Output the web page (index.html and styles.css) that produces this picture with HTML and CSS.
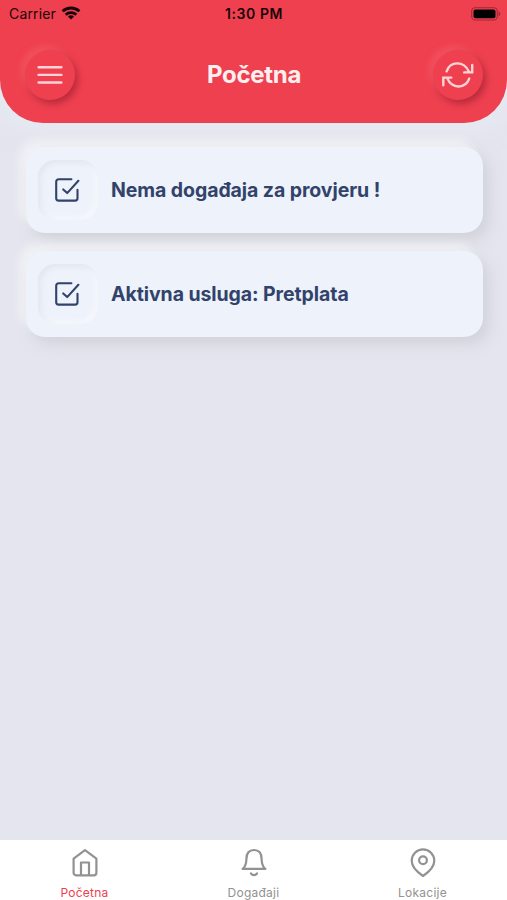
FILE: index.html
```html
<!DOCTYPE html>
<html lang="hr">
<head>
<meta charset="utf-8">
<meta name="viewport" content="width=device-width, initial-scale=1">
<title>Početna</title>
<link rel="stylesheet" href="styles.css">
</head>
<body>
<div class="app">
  <header class="header">
    <div class="status">
      <div class="carrier"><span>Carrier</span>
        <svg class="wifi" width="20" height="16" viewBox="0 0 20 16" fill="none" stroke="#180508" stroke-width="2.9"><path d="M1.6 6.3a12.3 12.3 0 0 1 16.8 0M4.7 9.7a7.8 7.8 0 0 1 10.6 0"/><path d="M10 14.6 6.9 11.6a4.6 4.6 0 0 1 6.2 0Z" fill="#180508" stroke="none"/></svg>
      </div>
      <span class="time">1:30 PM</span>
      <svg class="battery" width="30" height="14" viewBox="0 0 30 14"><rect x=".7" y=".7" width="25.6" height="12.3" rx="3.6" fill="none" stroke="#9d2937" stroke-width="1.1"/><rect x="2.5" y="2.5" width="22" height="8.8" rx="2" fill="#000"/><path d="M27.6 4.6c2.2.7 2.2 3.9 0 4.6Z" fill="#9d2937"/></svg>
    </div>
    <div class="bar">
      <button class="round" aria-label="Izbornik"><svg width="28" height="24" viewBox="0 0 28 24" stroke="#ffd3d6" stroke-width="2.4" stroke-linecap="round"><path d="M2.6 4.3h22.8M2.6 11.9h22.8M2.6 19.5h22.8"/></svg></button>
      <h1>Početna</h1>
      <button class="round" aria-label="Osvježi"><svg width="34" height="30" viewBox="0 0 34 30" fill="none" stroke="#ffd3d6" stroke-width="2.4" stroke-linecap="round" stroke-linejoin="miter"><path d="M5.6 11.3C9.2.9 22.8.6 27.8 11.5M31.2 5v7.4h-8M28.2 18.6C24.6 28.8 11 29.4 6.3 18.4M2.3 25.2v-7.6h8"/></svg></button>
    </div>
  </header>
  <main class="list">
    <article class="card">
      <div class="well"><svg width="26" height="26" viewBox="0 0 26 26" fill="none" stroke="#32436b" stroke-width="2.1" stroke-linecap="round" stroke-linejoin="round"><path d="M16.4 2.3H3.6a2.4 2.4 0 0 0-2.4 2.4v16.5a2.4 2.4 0 0 0 2.4 2.4h16.5a2.4 2.4 0 0 0 2.4-2.4v-8.5M8.2 12.4l4 3.7L23.4 3.8"/></svg></div>
      <h2>Nema događaja za provjeru !</h2>
    </article>
    <article class="card">
      <div class="well"><svg width="26" height="26" viewBox="0 0 26 26" fill="none" stroke="#32436b" stroke-width="2.1" stroke-linecap="round" stroke-linejoin="round"><path d="M16.4 2.3H3.6a2.4 2.4 0 0 0-2.4 2.4v16.5a2.4 2.4 0 0 0 2.4 2.4h16.5a2.4 2.4 0 0 0 2.4-2.4v-8.5M8.2 12.4l4 3.7L23.4 3.8"/></svg></div>
      <h2>Aktivna usluga: Pretplata</h2>
    </article>
  </main>
  <nav class="tabs">
    <a class="tab active"><svg width="28" height="30" viewBox="0 0 28 30" fill="none" stroke="#929292" stroke-width="2.2" stroke-linejoin="round" stroke-linecap="round"><path d="M2.6 10.6 14 2.1l11.4 8.5v14.2a2.5 2.5 0 0 1-2.5 2.5H5.1a2.5 2.5 0 0 1-2.5-2.5ZM10 27.3V14.5h8v12.8"/></svg><span>Početna</span></a>
    <a class="tab"><svg width="28" height="30" viewBox="0 0 28 30" fill="none" stroke="#929292" stroke-width="2.2" stroke-linejoin="round" stroke-linecap="round"><path d="M2.6 20.9c2.9-2.4 3.8-5.4 3.8-10C6.4 5.2 9.3 2 14 2s7.6 3.2 7.6 8.9c0 4.6.9 7.6 3.8 10ZM11 25.5c1.6 2.2 4.4 2.2 6 0"/></svg><span>Događaji</span></a>
    <a class="tab"><svg width="28" height="30" viewBox="0 0 28 30" fill="none" stroke="#929292" stroke-width="2.2" stroke-linejoin="round"><path d="M25.3 12.7c0 6-5.2 11.1-11.3 15.3C7.9 23.8 2.7 18.7 2.7 12.7a11.3 11.3 0 0 1 22.6 0Z"/><circle cx="14" cy="12.3" r="3.9"/></svg><span>Lokacije</span></a>
  </nav>
</div>
</body>
</html>
```
FILE: styles.css
```css
* { box-sizing: border-box; }
body { margin: 0; background: #e4e5ee; font-family: Inter, "Liberation Sans", sans-serif; }
.app { height: 900px; display: flex; flex-direction: column; overflow: hidden; }
.header { height: 123px; flex: none; background: #ef4050; border-radius: 0 0 43px 43px; box-shadow: 0 0 22px 9px rgba(235, 240, 247, .5); }
.status { height: 28px; display: grid; grid-template-columns: 1fr auto 1fr; align-items: center; padding: 0 6px 0 9px; color: #180508; font-size: 14px; line-height: 20px; }
.carrier { display: flex; align-items: center; gap: 5px; letter-spacing: .15px; }
.wifi { margin-top: -2px; }
.time { font-weight: 600; letter-spacing: .6px; margin-left: -2px; }
.battery { justify-self: end; margin-top: -1px; }
.bar { height: 94px; display: flex; align-items: center; justify-content: space-between; padding: 0 24px 0 25px; }
.round { width: 50px; height: 50px; padding: 0; border: 0; border-radius: 50%; background: #ef4050; display: flex; align-items: center; justify-content: center; box-shadow: 3px 4px 7px rgba(128, 20, 38, .48), -4px -4px 6px rgba(255, 130, 140, .26); }
.round svg { flex: none; }
h1 { margin: 0; color: #fff0f0; font-size: 24px; line-height: 30px; font-weight: 700; letter-spacing: -.3px; }
.list { flex: 1; padding: 24px 24px 0 26px; display: flex; flex-direction: column; gap: 17.5px; }
.card { height: 86px; display: flex; align-items: center; padding-left: 12px; border-radius: 19px; background: #eef2fa; box-shadow: 6px 7px 14px rgba(193, 194, 198, .5), -7px -7px 10px rgba(243, 244, 247, .9); }
.well { width: 60px; height: 60px; display: flex; align-items: center; justify-content: center; border-radius: 17px; box-shadow: inset 3px 3px 5px rgba(210, 215, 226, .38), inset -4px -4px 5px rgba(247, 249, 252, .65); }
h2 { margin: 0 0 0 13px; color: #32436b; font-size: 19.5px; line-height: 26px; font-weight: 700; letter-spacing: -.08px; white-space: nowrap; }
.tabs { height: 60px; flex: none; display: grid; grid-template-columns: repeat(3, 1fr); background: #fff; }
.tab { display: flex; flex-direction: column; align-items: center; padding-top: 8px; color: #929292; font-size: 12px; line-height: 16px; letter-spacing: .25px; }
.tab span { margin-top: 7px; }
.active { color: #ef4050; }
```
